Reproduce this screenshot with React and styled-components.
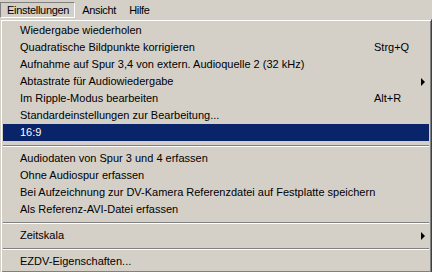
import React from "react";
import styled, { createGlobalStyle } from "styled-components";

const GlobalStyle = createGlobalStyle`
  html, body {
    margin: 0;
    padding: 0;
    background: #d4d0c8;
  }
  body {
    font-family: "Liberation Sans", Arial, sans-serif;
    font-size: 11px;
    color: #000;
  }
`;

const Screen = styled.div`
  width: 432px;
  height: 272px;
  overflow: hidden;
  background: #d4d0c8;
`;

const MenuBar = styled.div`
  height: 19px;
  display: flex;
  align-items: flex-start;
`;

const BarItem = styled.div`
  margin-top: 2px;
  height: 16px;
  line-height: 15px;
  padding: 0 5px 0 6px;
  box-sizing: border-box;
  border: 1px solid transparent;
  border-color: ${(p) => (p.$pressed ? "#808080 #fff #fff #808080" : "transparent")};
  letter-spacing: -0.3px;
  white-space: nowrap;
`;

const Dropdown = styled.div`
  border: 1px solid;
  border-color: #d4d0c8 #404040 #404040 #d4d0c8;
  box-shadow: inset 1px 1px #fff, inset -1px -1px #808080;
  padding: 2px;
`;

const Item = styled.div`
  display: grid;
  grid-template-columns: 354px 1fr 4px;
  align-items: center;
  height: 17px;
  line-height: 17px;
  padding: 0 4px 0 17px;
  white-space: nowrap;
  background: ${(p) => (p.$active ? "#0a246a" : "transparent")};
  color: ${(p) => (p.$active ? "#fff" : "#000")};
`;

const Arrow = styled.span`
  width: 0;
  height: 0;
  border-left: 4px solid currentColor;
  border-top: 4px solid transparent;
  border-bottom: 4px solid transparent;
`;

const Separator = styled.div`
  height: 9px;
  display: flex;
  flex-direction: column;
  justify-content: center;
  &::before {
    content: "";
    height: 1px;
    background: #808080;
  }
  &::after {
    content: "";
    height: 1px;
    background: #fff;
  }
`;

const entries = [
  { label: "Wiedergabe wiederholen" },
  { label: "Quadratische Bildpunkte korrigieren", key: "Strg+Q" },
  { label: "Aufnahme auf Spur 3,4 von extern. Audioquelle 2 (32 kHz)" },
  { label: "Abtastrate für Audiowiedergabe", sub: true },
  { label: "Im Ripple-Modus bearbeiten", key: "Alt+R" },
  { label: "Standardeinstellungen zur Bearbeitung..." },
  { label: "16:9", active: true },
  { sep: true },
  { label: "Audiodaten von Spur 3 und 4 erfassen" },
  { label: "Ohne Audiospur erfassen" },
  { label: "Bei Aufzeichnung zur DV-Kamera Referenzdatei auf Festplatte speichern" },
  { label: "Als Referenz-AVI-Datei erfassen" },
  { sep: true },
  { label: "Zeitskala", sub: true },
  { sep: true },
  { label: "EZDV-Eigenschaften..." },
];

export default function App() {
  return (
    <Screen>
      <GlobalStyle />
      <MenuBar>
        <BarItem $pressed>Einstellungen</BarItem>
        <BarItem>Ansicht</BarItem>
        <BarItem>Hilfe</BarItem>
      </MenuBar>
      <Dropdown>
        {entries.map((e, i) =>
          e.sep ? (
            <Separator key={i} />
          ) : (
            <Item key={i} $active={e.active}>
              <span>{e.label}</span>
              <span>{e.key}</span>
              {e.sub ? <Arrow /> : <span />}
            </Item>
          )
        )}
      </Dropdown>
    </Screen>
  );
}
